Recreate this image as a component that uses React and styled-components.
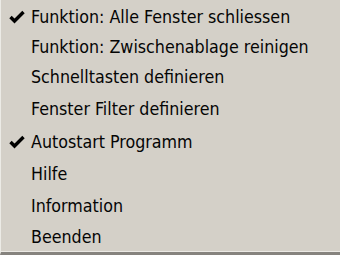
import styled, { createGlobalStyle } from 'styled-components';

const Global = createGlobalStyle`
  html, body {
    margin: 0;
    padding: 0;
    background: #d4d0c8;
  }
`;

const Menu = styled.div`
  width: 340px;
  height: 255px;
  box-sizing: border-box;
  background: #d4d0c8;
  border-left: 1px solid #ecebe6;
  border-bottom: 3px solid #86837e;
  box-shadow: inset 0 -1px 0 #ebe9e4;
  padding-top: 2px;
  display: flex;
  flex-direction: column;
  font-family: "DejaVu Sans Condensed", "DejaVu Sans", sans-serif;
  font-size: 17.7px;
  color: #050505;
`;

const Item = styled.div`
  height: ${({ h }) => h}px;
  display: flex;
  align-items: center;
  padding-left: 8px;
  white-space: nowrap;
`;

const CheckSlot = styled.span`
  width: 22px;
  height: 16px;
  display: flex;
  align-items: center;
  flex: none;
`;

const Check = () => (
  <svg width="16" height="14" viewBox="0 0 16 14">
    <path d="M1.5 7 L5.5 11 L14.5 2" fill="none" stroke="#000" strokeWidth="3.4" />
  </svg>
);

const items = [
  { label: 'Funktion: Alle Fenster schliessen', checked: true, h: 30 },
  { label: 'Funktion: Zwischenablage reinigen', h: 29 },
  { label: 'Schnelltasten definieren', h: 31 },
  { label: 'Fenster Filter definieren', h: 33 },
  { label: 'Autostart Programm', checked: true, h: 33 },
  { label: 'Hilfe', h: 32 },
  { label: 'Information', h: 32 },
  { label: 'Beenden', h: 30 },
];

export default function App() {
  return (
    <>
      <Global />
      <Menu>
        {items.map((it) => (
          <Item key={it.label} h={it.h}>
            <CheckSlot>{it.checked && <Check />}</CheckSlot>
            {it.label}
          </Item>
        ))}
      </Menu>
    </>
  );
}
